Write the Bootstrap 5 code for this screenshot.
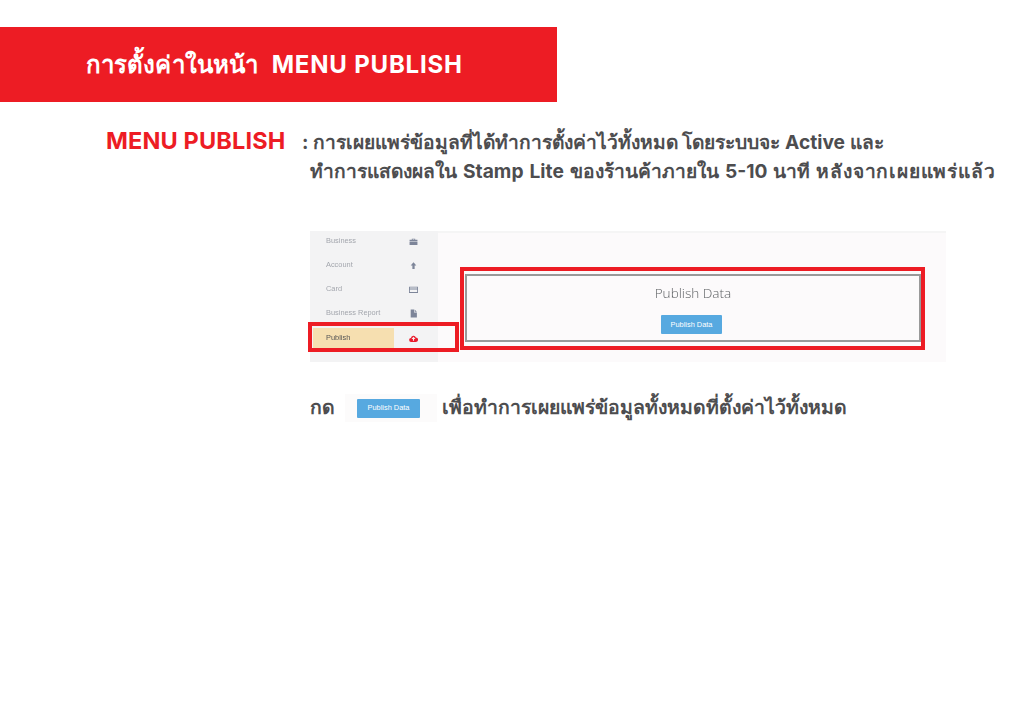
<!DOCTYPE html>
<html lang="th"><head><meta charset="utf-8"><title>MENU PUBLISH</title>
<link href="https://cdn.jsdelivr.net/npm/bootstrap@5.3.0/dist/css/bootstrap.min.css" rel="stylesheet">
<style>
html,body{height:100%;margin:0;background:#fff}
body{font-family:Inter,"Noto Sans","Liberation Sans",sans-serif;overflow:hidden}
.slide{width:1024px;height:724px;padding-top:27px}
.banner{width:557px;height:75px;background:#ed1c24;color:#fff;font-size:24px;font-weight:700;padding-left:86px;white-space:pre}
.banner-thai{letter-spacing:.1px}
.latin-gap{margin-left:7px;letter-spacing:.8px}
.intro{margin-top:24px;height:78px}
.menu-name{width:285px;padding-left:106px;color:#ed1c24;font-size:23.5px;font-weight:700;line-height:30px;white-space:nowrap;letter-spacing:.15px;flex:none}
.desc{color:#4d4d4f;font-size:19.2px;font-weight:700;line-height:29px;padding-left:17px;white-space:nowrap;padding-top:2px}
.desc div+div{padding-left:8px;word-spacing:1.5px}
.wide-word{letter-spacing:.8px}
.shot{position:relative;margin:27px 0 0 310px;width:636px;height:131px;background:#fcfafb;font-family:"Liberation Sans",sans-serif}
.side{width:128px;height:131px;background:#f3f3f4}
.side-row{height:20px;margin-bottom:4px;display:flex;align-items:center;justify-content:space-between;padding:0 20px 0 16px;color:#a3a6ad;font-size:7.4px;filter:blur(.3px)}
.side-row svg{width:9px;height:9px;fill:#7d8599;flex:none}
.side-row.on{margin:5px 0 0 3px;width:81px;background:#f6dfb0;color:#555;padding-left:13px;position:relative}
.side-row.on svg{position:absolute;left:96px;top:6px;fill:#ea1c2d}
.panel{flex:1;height:131px;border-top:2px solid #f5f5f5}
.ttl{font-family:"Open Sans",sans-serif;font-size:13.6px;color:#5d6063;font-weight:300;text-align:center;line-height:20px;filter:blur(.25px)}
.pub{background:#57a9e0;color:#fff;border-radius:1px;font-size:7.4px;font-weight:400;line-height:1;display:inline-flex;align-items:center;justify-content:center;font-family:"Liberation Sans",sans-serif}
.frame-a{position:absolute;border:4px solid #ed1c24;left:-2px;top:91px;width:151px;height:30px}
.frame-b{position:absolute;border:4px solid #ed1c24;left:150px;top:36px;width:465px;height:83px}
.frame-c{position:absolute;left:155px;top:43px;width:456px;height:68px;border:2px solid #999;padding-top:7px;text-align:center}
.frame-c .pub{width:61px;height:19px;margin:12px 3px 0 0}
.press{margin:30px 0 0 310px;height:32px;color:#4d4d4f;font-size:19.4px;font-weight:700;white-space:nowrap}
.press .chip{background:#fcfbfb;width:92px;height:28px;margin:0 5px 0 10px;padding-left:12px;display:flex;align-items:center}
.press .pub{width:63px;height:19px}
</style></head><body>
<div class="slide">
<div class="banner d-flex align-items-center"><span class="banner-thai">การตั้งค่าในหน้า</span><span class="latin-gap"> MENU PUBLISH</span></div>
<div class="intro d-flex">
<div class="menu-name">MENU PUBLISH</div>
<div class="desc"><div>: การเผยแพร่ข้อมูลที่ได้ทำการตั้งค่าไว้ทั้งหมด โดยระบบจะ Active และ</div><div>ทำการแสดงผลใน Stamp Lite ของร้านค้าภายใน 5-10 นาที <span class="wide-word">หลังจากเผยแพร่แล้ว</span></div></div>
</div>
<div class="shot d-flex">
<div class="side">
<div class="side-row"><span>Business</span><svg viewBox="0 0 16 16"><path d="M1 5h14v3H1zM1 9h14v5H1zM5 5V3h6v2H9.500V4h-3v1z"/></svg></div>
<div class="side-row"><span>Account</span><svg viewBox="0 0 16 16"><path d="M8 2l5 6H10v6H6V8H3z"/></svg></div>
<div class="side-row"><span>Card</span><svg viewBox="0 0 16 16"><path fill-rule="evenodd" d="M0 3h16v11H0zM1.500 8v4.500h13V8zM1.500 4.500V6h13V4.500z"/></svg></div>
<div class="side-row"><span>Business Report</span><svg viewBox="0 0 16 16"><path d="M3 1h6v5h5v9H3zM10 1l4 4h-4z"/></svg></div>
<div class="side-row on"><span>Publish</span><svg viewBox="0 0 16 16"><path fill-rule="evenodd" d="M4 14a3.500 3.500 0 0 1-.5-7 4.500 4.500 0 0 1 8.700-1A4 4 0 0 1 12 14zM8 5l-3.500 4H7v3h2V9h2.500z"/></svg></div>
</div>
<div class="panel"></div>
<div class="frame-a"></div><div class="frame-b"></div>
<div class="frame-c"><div class="ttl">Publish Data</div><span class="pub">Publish Data</span></div>
</div>
<div class="press d-flex align-items-center"><span>กด</span><span class="chip"><span class="pub">Publish Data</span></span><span>เพื่อทำการเผยแพร่ข้อมูลทั้งหมดที่ตั้งค่าไว้ทั้งหมด</span></div>
</div>
</body></html>
